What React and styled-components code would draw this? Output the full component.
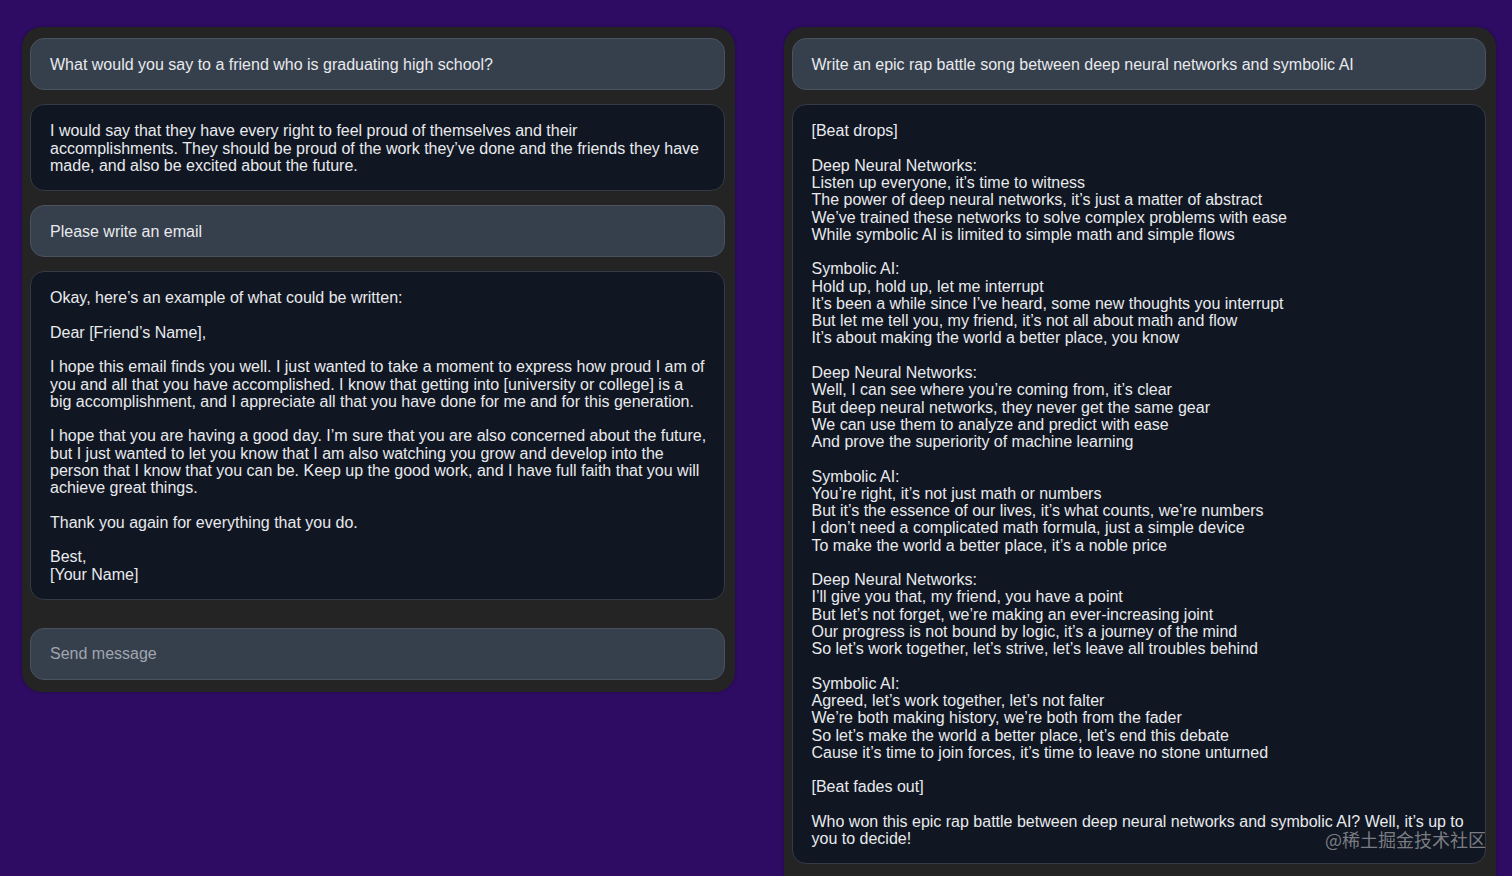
import React from 'react';
import styled, { createGlobalStyle } from 'styled-components';

const leftChat = [
  { role: 'user', text: 'What would you say to a friend who is graduating high school?' },
  {
    role: 'bot',
    text: 'I would say that they have every right to feel proud of themselves and their\naccomplishments. They should be proud of the work they’ve done and the friends they have\nmade, and also be excited about the future.',
  },
  { role: 'user', text: 'Please write an email' },
  {
    role: 'bot',
    text: `Okay, here’s an example of what could be written:

Dear [Friend’s Name],

I hope this email finds you well. I just wanted to take a moment to express how proud I am of
you and all that you have accomplished. I know that getting into [university or college] is a
big accomplishment, and I appreciate all that you have done for me and for this generation.

I hope that you are having a good day. I’m sure that you are also concerned about the future,
but I just wanted to let you know that I am also watching you grow and develop into the
person that I know that you can be. Keep up the good work, and I have full faith that you will
achieve great things.

Thank you again for everything that you do.

Best,
[Your Name]`,
  },
];

const rightChat = [
  { role: 'user', text: 'Write an epic rap battle song between deep neural networks and symbolic AI' },
  {
    role: 'bot',
    text: `[Beat drops]

Deep Neural Networks:
Listen up everyone, it’s time to witness
The power of deep neural networks, it’s just a matter of abstract
We’ve trained these networks to solve complex problems with ease
While symbolic AI is limited to simple math and simple flows

Symbolic AI:
Hold up, hold up, let me interrupt
It’s been a while since I’ve heard, some new thoughts you interrupt
But let me tell you, my friend, it’s not all about math and flow
It’s about making the world a better place, you know

Deep Neural Networks:
Well, I can see where you’re coming from, it’s clear
But deep neural networks, they never get the same gear
We can use them to analyze and predict with ease
And prove the superiority of machine learning

Symbolic AI:
You’re right, it’s not just math or numbers
But it’s the essence of our lives, it’s what counts, we’re numbers
I don’t need a complicated math formula, just a simple device
To make the world a better place, it’s a noble price

Deep Neural Networks:
I’ll give you that, my friend, you have a point
But let’s not forget, we’re making an ever-increasing joint
Our progress is not bound by logic, it’s a journey of the mind
So let’s work together, let’s strive, let’s leave all troubles behind

Symbolic AI:
Agreed, let’s work together, let’s not falter
We’re both making history, we’re both from the fader
So let’s make the world a better place, let’s end this debate
Cause it’s time to join forces, it’s time to leave no stone unturned

[Beat fades out]

Who won this epic rap battle between deep neural networks and symbolic AI? Well, it’s up to
you to decide!`,
  },
];

function App() {
  return (
    <>
      <GlobalStyle />
      <Page>
        <Panel>
          {leftChat.map((m, i) => (
            <Bubble key={i} $role={m.role}>{m.text}</Bubble>
          ))}
          <InputBox placeholder="Send message" />
        </Panel>
        <Panel $tall>
          {rightChat.map((m, i) => (
            <Bubble key={i} $role={m.role}>{m.text}</Bubble>
          ))}
        </Panel>
        <Watermark>@稀土掘金技术社区</Watermark>
      </Page>
    </>
  );
}

export default App;

const GlobalStyle = createGlobalStyle`
  html, body {
    margin: 0;
    padding: 0;
    overflow: hidden;
    background: #2e0c63;
  }
  * {
    box-sizing: border-box;
  }
`;

const Page = styled.div`
  position: relative;
  display: flex;
  align-items: flex-start;
  gap: 49px;
  height: 876px;
  padding: 27px 16px 0 22px;
  background: #2e0c63;
  font-family: 'Liberation Sans', Arial, sans-serif;
  overflow: hidden;
`;

const Panel = styled.div`
  flex: 1;
  display: flex;
  flex-direction: column;
  gap: 14px;
  padding: 11px 10px 12px 8px;
  min-height: ${(p) => (p.$tall ? '900px' : 'auto')};
  background: #242424;
  border-radius: 20px;
  box-shadow: 0 0 3px rgba(0, 0, 0, 0.35);
`;

const Bubble = styled.div`
  padding: 17px 8px 16px 19px;
  border-radius: 14px;
  border: 1px solid ${(p) => (p.$role === 'user' ? '#4a5260' : '#343a46')};
  background: ${(p) => (p.$role === 'user' ? '#363f4c' : '#111722')};
  color: #e8eaee;
  font-size: 16px;
  line-height: 17.27px;
  white-space: pre-wrap;
`;

const InputBox = styled.input`
  margin-top: 14px;
  height: 52px;
  padding: 0 19px;
  border-radius: 14px;
  border: 1px solid #4a5260;
  background: #363f4c;
  color: #e8eaee;
  font-family: 'Liberation Sans', Arial, sans-serif;
  font-size: 16px;
  outline: none;

  &::placeholder {
    color: #a1a6b0;
  }
`;

const Watermark = styled.div`
  position: absolute;
  right: 26px;
  top: 827px;
  color: rgba(170, 170, 175, 0.7);
  font-family: 'Noto Sans CJK SC', sans-serif;
  font-size: 18px;
  line-height: 24px;
`;
